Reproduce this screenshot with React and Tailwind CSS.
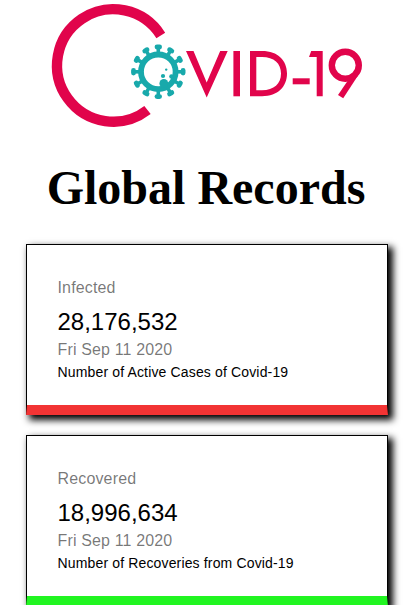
const date = "Fri Sep 11 2020";

const cards = [
  { title: "Infected", value: "28,176,532", note: "Number of Active Cases of Covid-19", edge: "border-b-[#f23434]" },
  { title: "Recovered", value: "18,996,634", note: "Number of Recoveries from Covid-19", edge: "border-b-[#21f521]" },
];

const spikes = [0, 30, 60, 90, 120, 150, 180, 210, 240, 270, 300, 330];

function Logo() {
  return (
    <svg className="block h-[135px] w-full shrink-0" viewBox="0 0 411 135" role="img" aria-label="COVID-19">
      <path d="M160.8 35.5A56.2 56.2 0 1 0 147.5 110" fill="none" stroke="#e1044b" strokeWidth="10.4" />
      <g fill="#18a9ab" stroke="#18a9ab">
        <circle cx="158.3" cy="71.8" r="17.3" fill="none" strokeWidth="5.8" />
        {spikes.map((a) => (
          <g key={a} transform={`rotate(${a} 158.3 71.8)`}>
            <path d="M158.3 53v-5" strokeWidth="3.6" />
            <path d="M157 47h2.600" strokeWidth="4.800" strokeLinecap="round" />
          </g>
        ))}
        <g stroke="none">
          <circle cx="163.8" cy="83.4" r="4.4" />
          <circle cx="163" cy="76" r="2.1" />
          <circle cx="171.5" cy="76.5" r="2.3" />
          <circle cx="166.2" cy="69.6" r="1.2" />
        </g>
      </g>
      <g fill="#e1044b">
        <path d="M186 51h7.5L206.7 82.5 220.2 51h7.5L206.7 97.6Z" />
        <path d="M233.4 51h6.6v45.3h-6.6Z" />
        <path fillRule="evenodd" d="M250 51h12c16 0 25 9.5 25 22.6s-9 22.7-25 22.7h-12Zm6.3 6v33.3h5.7c12 0 19-6.5 19-16.7s-7-16.600-19-16.600Z" />
        <path d="M292.7 78.3h17v6h-17Z" />
        <path d="M311.2 51h11.500v45.300h-6V57H309Z" />
        <path d="M338 95l9.9-14.500 10.300-5.300L343.200 98.300Z" />
      </g>
      <circle cx="345.3" cy="65.3" r="13.5" fill="none" stroke="#e1044b" strokeWidth="6.4" />
    </svg>
  );
}

function Card({ title, value, note, edge }) {
  return (
    <section className={`h-[171px] w-[362px] shrink-0 border border-b-10 border-black bg-white px-[30.5px] pt-[31px] shadow-[4px_4px_7px_1px_#000] ${edge}`}>
      <p className="mb-[5.6px] text-base leading-6 tracking-[0.00938em] text-black/54">{title}</p>
      <p className="text-2xl leading-8">{value}</p>
      <p className="text-base leading-6 tracking-[0.00938em] text-black/54">{date}</p>
      <p className="text-sm leading-5 tracking-[0.01071em]">{note}</p>
    </section>
  );
}

export default function App() {
  return (
    <main className="flex h-[605px] w-full flex-col items-center overflow-hidden bg-white font-['Liberation_Sans',Arial,sans-serif] text-black">
      <Logo />
      <h1 className="mt-[25px] h-14 w-full pl-px text-center font-['Liberation_Serif',serif] text-5xl leading-14 font-bold">Global Records</h1>
      <div className="mt-7 flex w-full flex-col gap-5 pl-[26px]">
        {cards.map((card) => <Card key={card.title} {...card} />)}
      </div>
    </main>
  );
}
